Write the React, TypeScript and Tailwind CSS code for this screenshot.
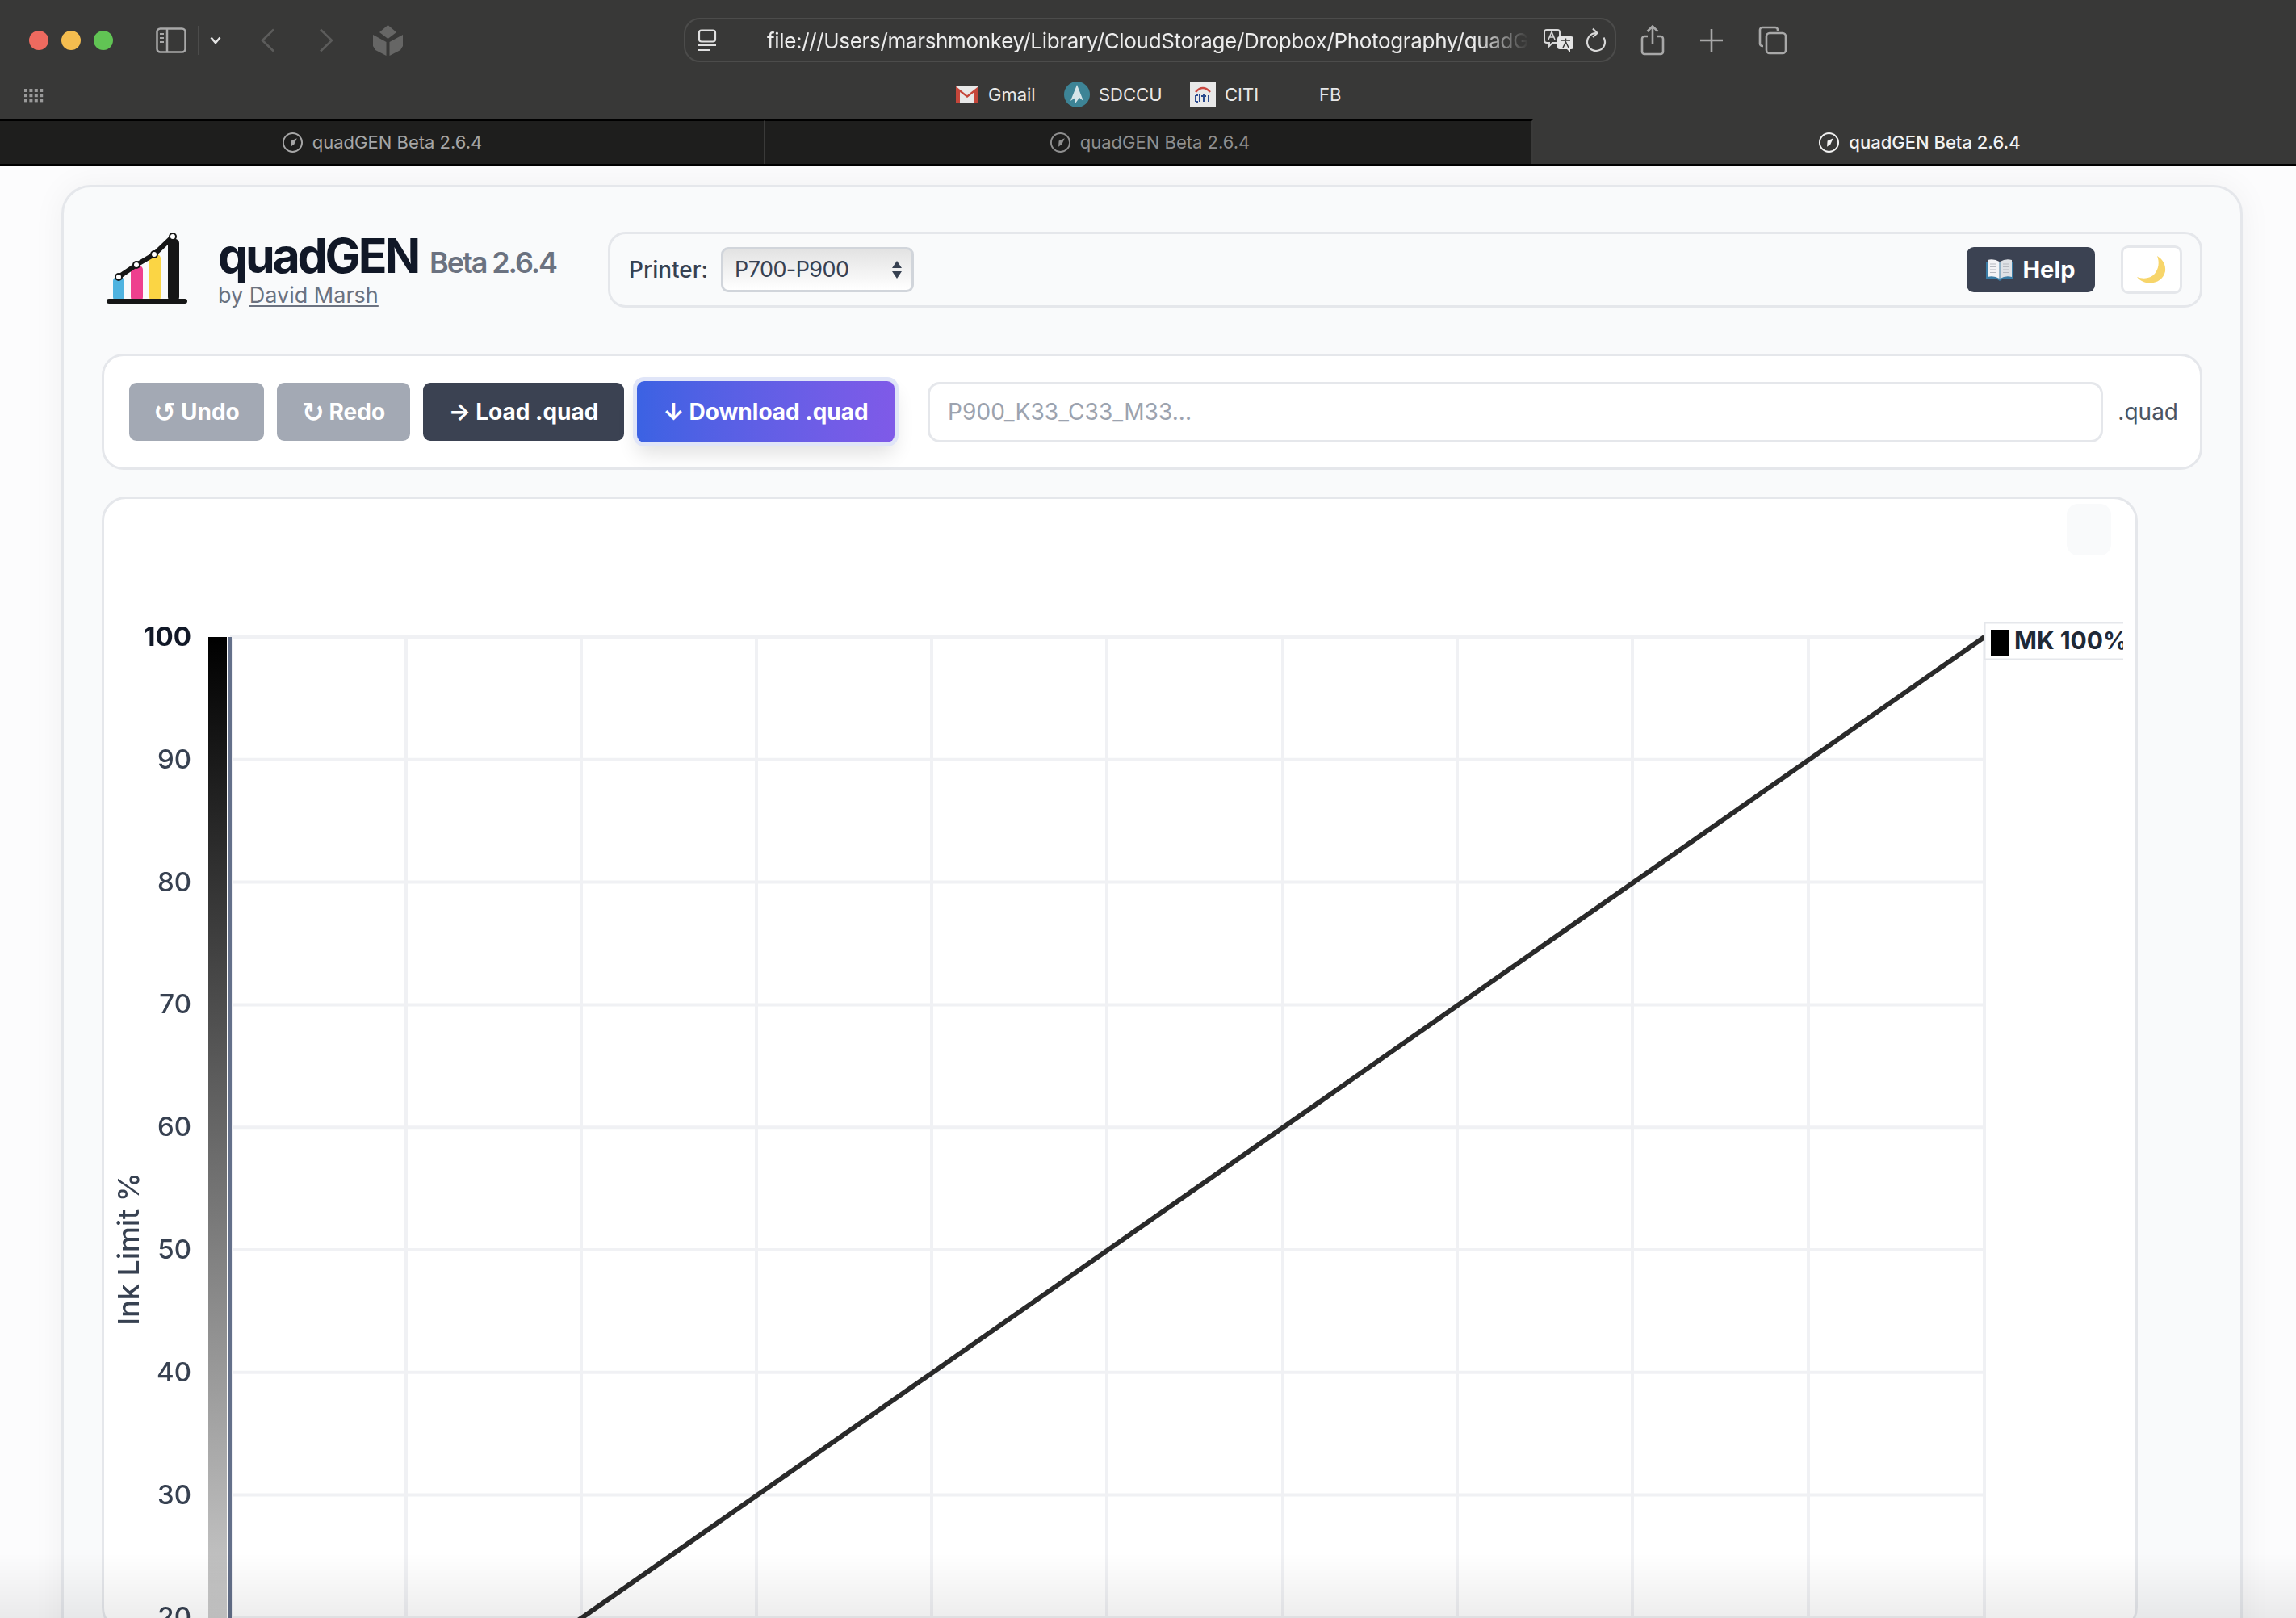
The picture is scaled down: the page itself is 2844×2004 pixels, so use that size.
import React from 'react';

const YTICKS = [100, 90, 80, 70, 60, 50, 40, 30, 20];
const Y0 = 789;
const YSTEP = 151.8;
const XGRID = [287, 503, 720, 937, 1154, 1371, 1589, 1805, 2022, 2240, 2458];

const CompassIcon = ({ color }: { color: string }) => (
  <svg width="27" height="27" viewBox="0 0 28 28" fill="none" className="shrink-0">
    <circle cx="14" cy="14" r="12" stroke={color} strokeWidth="2" />
    <path d="M19.5 8.500 L16 16 L11.500 19.500 L12 12 Z" fill={color} />
  </svg>
);

const Tab = ({ active, color, className }: { active?: boolean; color: string; className: string }) => (
  <div
    className={`flex items-center justify-center gap-[11px] h-full border-t-2 border-r-2 ${className} ${
      active ? 'bg-[#383837] border-t-[#383837] border-r-transparent font-medium' : 'bg-[#1e1e1d] border-t-black border-r-[#3a3a39]'
    }`}
    style={{ color }}
  >
    <CompassIcon color={color} />
    <span className="text-[22px]">quadGEN Beta 2.6.4</span>
  </div>
);

const BrowserChrome = () => (
  <div className="bg-[#383837] font-['Inter',sans-serif]">
    <div className="h-[99px] flex items-center pl-[36px]">
      <div className="flex gap-[16px]">
        <div className="w-[24px] h-[24px] rounded-full bg-[#ee6a5f]" />
        <div className="w-[24px] h-[24px] rounded-full bg-[#f5bd4f]" />
        <div className="w-[24px] h-[24px] rounded-full bg-[#61c454]" />
      </div>
      {/* sidebar toggle */}
      <svg width="38" height="32" viewBox="0 0 38 32" fill="none" stroke="#a8a8a8" strokeWidth="2.500" className="ml-[53px]">
        <rect x="1.500" y="1.500" width="35" height="29" rx="4" />
        <path d="M14 2v28" />
        <path d="M5 8h5M5 13h5M5 18h5" strokeWidth="2" />
      </svg>
      <div className="w-[2px] h-[36px] bg-[#4c4c4b] ml-[14px]" />
      <svg width="14" height="10" viewBox="0 0 14 10" fill="none" stroke="#e4e4e4" strokeWidth="2.600" className="ml-[13px]">
        <path d="M1.500 1.500 L7 8 L12.500 1.500" />
      </svg>
      <svg width="20" height="30" viewBox="0 0 20 30" fill="none" stroke="#5c5c5b" strokeWidth="2.600" className="ml-[48px]">
        <path d="M17 1.500 L3 15 L17 28.500" />
      </svg>
      <svg width="20" height="30" viewBox="0 0 20 30" fill="none" stroke="#5c5c5b" strokeWidth="2.600" className="ml-[52px]">
        <path d="M3 1.500 L17 15 L3 28.500" />
      </svg>
      <svg width="37" height="38" viewBox="0 0 37 38" fill="#666665" className="ml-[48px]">
        <path d="M18.500 0 L29 9 L18.500 17 L8 9 Z" />
        <path d="M0 12 L16.500 21 L16.500 38 L3 31 L0 26 Z" />
        <path d="M37 12 L20.500 21 L20.500 38 L34 31 L37 26 Z" />
      </svg>
      {/* url bar */}
      <div className="ml-[348px] w-[1155px] h-[55px] border-2 border-[#4c4c4b] rounded-[20px] flex items-center pl-[15px] pr-[10px]">
        <svg width="24" height="28" viewBox="0 0 24 28" fill="none" stroke="#e0e0e0" strokeWidth="2.200" className="shrink-0">
          <rect x="2" y="1.500" width="20" height="14" rx="3" />
          <path d="M1 20h22M1 26h15" />
        </svg>
        <div className="ml-[62px] mt-[2px] w-[947px] overflow-hidden whitespace-nowrap text-[26px] tracking-[-0.33px] text-[#ececec] [mask-image:linear-gradient(to_right,black_93%,transparent)]">
          file:///Users/marshmonkey/Library/CloudStorage/Dropbox/Photography/quadGE
        </div>
        <svg width="40" height="30" viewBox="0 0 40 30" className="ml-[18px] shrink-0" fill="none">
          <path d="M4 2h13a3 3 0 0 1 3 3v10a3 3 0 0 1-3 3h-6l-4 4v-4H4a3 3 0 0 1-3-3V5a3 3 0 0 1 3-3z" stroke="#d8d8d8" strokeWidth="2" />
          <path d="M6 14 L10 4.500 L14 14 M7.500 11h5" stroke="#d8d8d8" strokeWidth="1.500" />
          <path d="M20 10h14a3 3 0 0 1 3 3v10a3 3 0 0 1-3 3h-1v4l-4-4h-9a3 3 0 0 1-3-3V13a3 3 0 0 1 3-3z" fill="#e4e4e4" />
          <path d="M22 15h11M27.500 12.500v2.500M24 24 L27.500 17 L31 24" stroke="#383837" strokeWidth="1.500" />
        </svg>
        <svg width="26" height="32" viewBox="0 0 26 32" fill="none" stroke="#d8d8d8" strokeWidth="2.200" className="ml-[12px] shrink-0">
          <path d="M13 7 A11 11 0 1 0 22.500 12.500" />
          <path d="M9 1.500 L14.500 7 L9 12" />
        </svg>
      </div>
      <svg width="30" height="38" viewBox="0 0 30 38" fill="none" stroke="#a8a8a8" strokeWidth="2.600" className="ml-[30px]">
        <path d="M9 14H5a3 3 0 0 0-3 3v16a3 3 0 0 0 3 3h20a3 3 0 0 0 3-3V17a3 3 0 0 0-3-3h-4" />
        <path d="M15 24V2M8.500 8 L15 1.500 L21.500 8" />
      </svg>
      <svg width="28" height="28" viewBox="0 0 28 28" fill="none" stroke="#a8a8a8" strokeWidth="2.600" className="ml-[44px]">
        <path d="M14 0v28M0 14h28" />
      </svg>
      <svg width="36" height="36" viewBox="0 0 36 36" fill="none" stroke="#a8a8a8" strokeWidth="2.600" className="ml-[44px]">
        <path d="M6 25H5a3 3 0 0 1-3-3V5a3 3 0 0 1 3-3h16a3 3 0 0 1 3 3v2" />
        <rect x="10" y="9" width="24" height="25" rx="4" />
      </svg>
    </div>
    <div className="h-[49px] flex items-start text-[22px] text-[#e8e8e8]">
      <svg width="24" height="17" viewBox="0 0 24 17" fill="#9a9a9a" className="ml-[30px] mt-[11px] shrink-0">
        {[0, 1, 2].flatMap((r) =>
          [0, 1, 2, 3].map((c) => <rect key={`${r}-${c}`} x={c * 6.4} y={r * 6.2} width="4" height="4" />)
        )}
      </svg>
      <div className="flex items-center h-[36px] ml-[1130px]">
        <svg width="28" height="22" viewBox="0 0 28 22" className="shrink-0">
          <rect width="28" height="22" rx="2" fill="#e8e8e8" />
          <path d="M0 1 L14 12 L28 1 L28 22 L23 22 L23 8 L14 15 L5 8 L5 22 L0 22 Z" fill="#c5463a" />
        </svg>
        <span className="ml-[12px] w-[59px]">Gmail</span>
        <svg width="32" height="32" viewBox="0 0 32 32" className="ml-[35px] shrink-0">
          <circle cx="16" cy="16" r="16" fill="#3d8496" />
          <path d="M16 4 L8 24 L14 20 L14 27 L19 20 L24 24 Z" fill="#d5e4e8" />
        </svg>
        <span className="ml-[11px] w-[77px]">SDCCU</span>
        <svg width="32" height="32" viewBox="0 0 32 32" className="ml-[36px] shrink-0">
          <rect width="32" height="32" fill="#e8e8e8" />
          <path d="M7 13 Q16 3 25 13" fill="none" stroke="#c9473f" strokeWidth="2.500" />
          <path d="M7 25 V17 M12 25 V15 M17 25 V15 M14 18 H20 M23 25 V17 M10 17 H7 M7 25 H10" fill="none" stroke="#2b4a8e" strokeWidth="2" />
        </svg>
        <span className="ml-[11px] w-[40px]">CITI</span>
        <span className="ml-[77px]">FB</span>
      </div>
    </div>
    <div className="h-[57px] flex border-b-2 border-b-black">
      <Tab color="#a6a6a6" className="w-[948px]" />
      <Tab color="#8f8f8f" className="w-[951px] pl-[3px]" />
      <Tab active color="#f2f2f2" className="flex-1 pl-[14px]" />
    </div>
  </div>
);

const Logo = () => (
  <svg width="106" height="92" viewBox="130 285 106 92" className="shrink-0" fill="none">
    <rect x="140" y="340" width="14" height="30" rx="5" fill="#4fb3e0" />
    <rect x="162" y="326" width="15" height="44" rx="5" fill="#ee3f8e" />
    <rect x="185" y="312" width="14" height="58" rx="5" fill="#fbd544" />
    <rect x="208" y="293" width="14" height="77" rx="5" fill="#161616" />
    <path d="M135 370 H229" stroke="#161616" strokeWidth="6" strokeLinecap="round" />
    <path d="M147 340 L169 325 L191 312 L214 290" stroke="#161616" strokeWidth="6" />
    {[[147, 340], [169, 325], [191, 312], [214, 290]].map(([cx, cy]) => (
      <circle key={cx} cx={cx} cy={cy} r="4" fill="#fff" stroke="#161616" strokeWidth="2" />
    ))}
  </svg>
);

const BookEmoji = () => (
  <svg width="34" height="28" viewBox="0 0 34 28" className="shrink-0">
    <path d="M0 5 H34 V26 H20 L17 28 L14 26 H0 Z" fill="#3a7ca5" />
    <path d="M2 2 Q10 0 16.500 4 V25 Q10 21 2 23 Z" fill="#f3f4f6" />
    <path d="M32 2 Q24 0 17.500 4 V25 Q24 21 32 23 Z" fill="#dfe2e6" />
    <path d="M5 7h8M5 10.500h8M5 14h8M5 17.500h8M21 7h8M21 10.500h8M21 14h8M21 17.500h8" stroke="#b5b9c0" strokeWidth="1" />
  </svg>
);

const MoonEmoji = () => (
  <svg width="36" height="36" viewBox="0 0 36 36" className="shrink-0">
    <path d="M25 1 C32 5 36 12 35 20 C33 30 24 35 15 34.500 C8 34 3 31 0 27 C8 30 17 29 22 23 C27 17 28 8 25 1 Z" fill="#f7d56a" />
  </svg>
);

const ToolButton = ({ children, className }: { children: React.ReactNode; className: string }) => (
  <button className={`h-[72px] rounded-[9px] text-white text-[28px] font-bold whitespace-nowrap flex items-center justify-center gap-[6px] ${className}`}>
    {children}
  </button>
);

const Chart = () => (
  <svg width="2516" height="1400" viewBox="129 618 2516 1400" className="block blur-[0.5px]" fontFamily="Inter, sans-serif">
    <defs>
      <linearGradient id="inkBar" x1="0" y1="0" x2="0" y2="1">
        <stop offset="0" stopColor="#000" />
        <stop offset="1" stopColor="#fff" />
      </linearGradient>
    </defs>
    {XGRID.map((x) => (
      <line key={x} x1={x} x2={x} y1={Y0 - 2} y2={2018} stroke="#f0f1f4" strokeWidth="4" />
    ))}
    {YTICKS.map((t, i) => (
      <line key={t} x1={287} x2={2460} y1={Y0 + i * YSTEP} y2={Y0 + i * YSTEP} stroke="#f0f1f4" strokeWidth="4" />
    ))}
    <rect x="258" y={Y0} width="23" height="1518" fill="url(#inkBar)" />
    <rect x="282" y={Y0} width="5" height="1518" fill="#64708a" />
    <line x1="287" y1="2307" x2="2458" y2="789" stroke="#2a2a2a" strokeWidth="6" />
    {YTICKS.map((t, i) => (
      <text
        key={t}
        x="237"
        y={Y0 + i * YSTEP + 11}
        textAnchor="end"
        fontSize="33"
        fontWeight={t === 100 ? 700 : 500}
        fill={t === 100 ? '#111827' : '#374151'}
      >
        {t}
      </text>
    ))}
    <text transform="translate(172 1547) rotate(-90)" textAnchor="middle" fontSize="36" fontWeight="500" fill="#374151">
      Ink Limit %
    </text>
    <svg x="2458" y="771" width="172" height="46" viewBox="2458 771 172 46">
      <rect x="2458" y="771" width="180" height="46" fill="#fff" stroke="#e5e7eb" strokeWidth="3" />
      <rect x="2466" y="780" width="22" height="32" fill="#000" />
      <text x="2495" y="804" fontSize="30" fontWeight="700" fill="#1f2937">MK 100%</text>
    </svg>
  </svg>
);

export default function App() {
  return (
    <div className="h-[2004px] overflow-hidden relative bg-[#fcfcfd] font-['Inter',sans-serif]">
      <BrowserChrome />
      <div className="ml-[76px] mr-[66px] mt-[24px] bg-[#f9fafb] border-[3px] border-[#e5e7eb] rounded-[36px] px-[47px] pt-[55px] shadow-[0_0_40px_rgba(0,0,0,0.05)] h-[1900px]">
        <div className="flex items-center h-[94px]">
          <div className="ml-[4px]">
            <Logo />
          </div>
          <div className="ml-[34px] w-[483px] shrink-0">
            <div className="flex items-baseline h-[56px]">
              <span className="text-[59px] leading-[56px] font-bold text-[#111827] tracking-[-3.2px]">quadGEN</span>
              <span className="ml-[14px] text-[36px] leading-[56px] font-semibold text-[#6b7280] tracking-[-2.1px]">Beta 2.6.4</span>
            </div>
            <div className="text-[27px] text-[#6b7280] leading-[28px] mt-[7px]">
              by <span className="underline underline-offset-[3px]">David Marsh</span>
            </div>
          </div>
          <div className="flex-1 h-[94px] bg-[#f9fafb] border-[3px] border-[#e5e7eb] rounded-[22px] flex items-center pl-[23px] pr-[22px]">
            <span className="text-[28px] font-medium text-[#374151]">Printer:</span>
            <div className="ml-[16px] w-[239px] h-[56px] rounded-[9px] border-[3px] border-[#d1d5db] bg-gradient-to-b from-[#e3e3e3] to-white flex items-center justify-between pl-[14px] pr-[12px]">
              <span className="text-[27px] tracking-[-0.6px] text-[#374151]">P700-P900</span>
              <svg width="12" height="22" viewBox="0 0 12 22" fill="#374151">
                <path d="M6 0 L12 9 H0 Z M6 22 L0 13 H12 Z" />
              </svg>
            </div>
            <button className="ml-auto w-[159px] h-[56px] rounded-[9px] bg-[#3b4252] text-white text-[29px] font-bold flex items-center justify-center gap-[11px]">
              <BookEmoji />
              Help
            </button>
            <div className="ml-[32px] w-[76px] h-[60px] bg-white border-[3px] border-[#e5e7eb] rounded-[9px] flex items-center justify-center">
              <MoonEmoji />
            </div>
          </div>
        </div>

        <div className="mt-[57px] h-[144px] bg-white border-[3px] border-[#e5e7eb] rounded-[27px] flex items-center pl-[31px] pr-[27px]">
          <ToolButton className="w-[167px] bg-[#a3a9b4]">
            <span className="font-['DejaVu_Sans',sans-serif] text-[33px] leading-none">↺</span>
            Undo
          </ToolButton>
          <ToolButton className="ml-[16px] w-[165px] bg-[#a3a9b4]">
            <span className="font-['DejaVu_Sans',sans-serif] text-[33px] leading-none">↻</span>
            Redo
          </ToolButton>
          <ToolButton className="ml-[16px] w-[249px] bg-[#3b4252]">
            <span className="text-[29px]">→</span>
            Load .quad
          </ToolButton>
          <ToolButton className="ml-[16px] w-[319px] !h-[76px] bg-gradient-to-r from-[#3b62e3] to-[#7f5ae8] shadow-[0_0_0_5px_#e0e5f8,0_14px_24px_rgba(0,0,0,0.12)]">
            <span className="text-[29px]">↓</span>
            Download .quad
          </ToolButton>
          <div className="ml-[41px] flex-1 h-[75px] bg-white border-[3px] border-[#e5e7eb] rounded-[15px] flex items-center pl-[22px] text-[28px] tracking-[0.1px] text-[#9ca3af]">
            P900_K33_C33_M33...
          </div>
          <span className="ml-[18px] text-[28px] text-[#4b5563]">.quad</span>
        </div>

        <div className="relative mt-[33px] w-[2522px] bg-white border-[3px] border-[#e5e7eb] rounded-[30px] overflow-hidden">
          <Chart />
          <div className="absolute left-[2431px] top-[6px] w-[55px] h-[64px] rounded-[14px] bg-[#f9fafb]" />
        </div>
      </div>
      <div className="absolute inset-x-0 bottom-0 h-[80px] bg-gradient-to-b from-transparent to-[rgba(0,0,0,0.07)]" />
    </div>
  );
}
